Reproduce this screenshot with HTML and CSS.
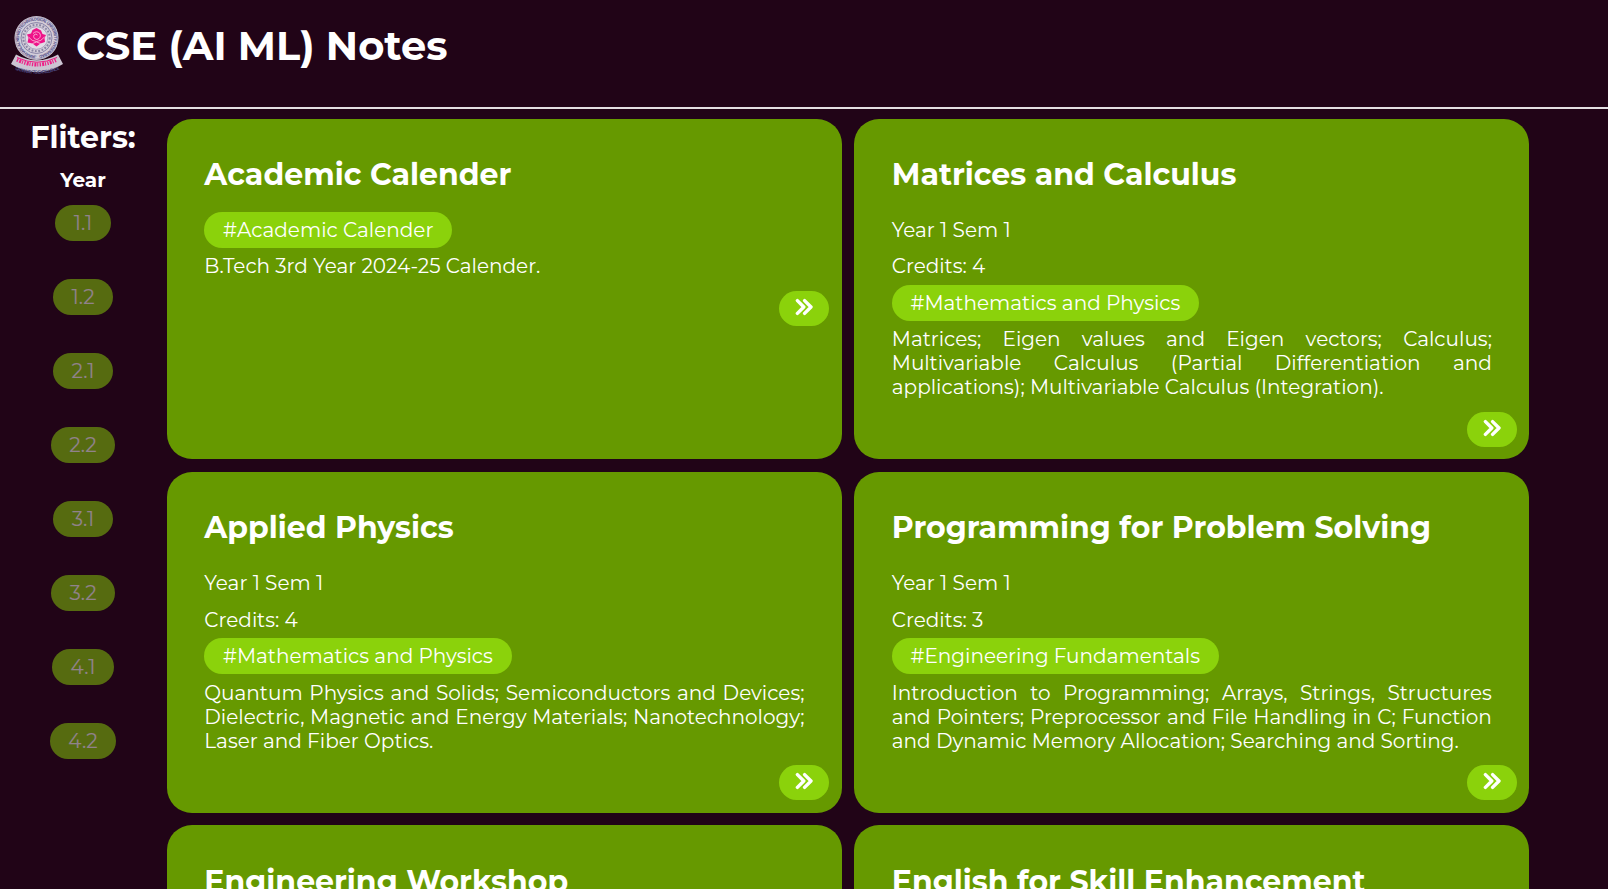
FILE: index.html
```html
<!DOCTYPE html>
<html lang="en">
<head>
<meta charset="utf-8">
<title>CSE (AI ML) Notes</title>
<link rel="stylesheet" href="styles.css">
</head>
<body>
<header class="header">
  <svg class="logo" viewBox="0 0 54 60">
    <defs>
      <path id="ring" d="M26.500 40.500a17.500 17.500 0 1 1 .1 0"/>
      <path id="motto" d="M3 54Q27 63.500 51 54"/>
    </defs>
    <circle cx="26.500" cy="23" r="22" fill="#d3cdd9"/>
    <circle cx="26.500" cy="23" r="21" fill="none" stroke="#8e87a6" stroke-width=".6"/>
    <text class="logo-ring"><textPath href="#ring" textLength="107">JAWAHARLAL NEHRU TECHNOLOGICAL UNIVERSITY HYDERABAD</textPath></text>
    <circle cx="26.500" cy="23" r="15.500" fill="#d3cdd9" stroke="#76719a" stroke-width=".8"/>
    <circle cx="26.500" cy="23" r="13.200" fill="none" stroke="#8985a3" stroke-width="2" stroke-dasharray="1.800 1.600"/>
    <circle cx="26.500" cy="23" r="11.300" fill="#e2dce6" stroke="#77729a" stroke-width=".5"/>
    <path d="M26.500 13l4.500 2.500 1.500 3.500 3.500 1-1.500 3 .5 4-4.500 1.500-4 3-4-3-5-1 1-4.500-1.500-3.500 4-1 1.500-3.500z" fill="#ee1288"/>
    <path d="M23 18.500q3.500-3.500 7 0q1.500 4.500-3 6q-4.500-1-3-4.500q2-2 3.500 0" fill="none" stroke="#fbc4e0" stroke-width=".8"/>
    <path d="M18.500 22q3.500 4.500 8 4.500t8-4.500M22.500 28.500l4-1.500 4 1.500" fill="none" stroke="#fbc4e0" stroke-width=".8"/>
    <path d="M6 39.500Q27 51 48 39.500L53 49Q27 65.500 1 49Z" fill="#cbc4d2"/>
    <path d="M7 42.500Q27 52 47 42.500" fill="none" stroke="#ee2087" stroke-width="1"/>
    <path d="M7 44.700Q27 54.500 47 44.700" fill="none" stroke="#ee2087" stroke-width="3.800" stroke-dasharray="1.300 1.200 2 .9 1 1.400"/>
    <text class="logo-motto"><textPath href="#motto" startOffset="2" textLength="46">GATEWAY TO EXCELLENCE</textPath></text>
  </svg>
  <h1 class="title">CSE (AI ML) Notes</h1>
</header>
<div class="page">
  <aside class="filters">
    <h2 class="filters-title">Fliters:</h2>
    <h3 class="filters-group">Year</h3>
    <ul class="filter-list">
      <li class="chip">1.1</li>
      <li class="chip">1.2</li>
      <li class="chip">2.1</li>
      <li class="chip">2.2</li>
      <li class="chip">3.1</li>
      <li class="chip">3.2</li>
      <li class="chip">4.1</li>
      <li class="chip">4.2</li>
    </ul>
  </aside>
  <main class="cards">
    <article class="card">
      <h2 class="card-title">Academic Calender</h2>
      <p class="row"><span class="tag">#Academic Calender</span></p>
      <p class="desc">B.Tech 3rd Year 2024-25 Calender.</p>
      <a class="go"><svg class="go-icon" viewBox="0 0 18 18"><path d="M2.400 2.600l6.400 6.400-6.400 6.400M9.600 2.600l6.400 6.400-6.400 6.400"/></svg></a>
    </article>
    <article class="card">
      <h2 class="card-title">Matrices and Calculus</h2>
      <p class="row">Year 1 Sem 1</p>
      <p class="row">Credits: 4</p>
      <p class="row"><span class="tag">#Mathematics and Physics</span></p>
      <p class="desc">Matrices; Eigen values and Eigen vectors; Calculus; Multivariable Calculus (Partial Differentiation and applications); Multivariable Calculus (Integration).</p>
      <a class="go"><svg class="go-icon" viewBox="0 0 18 18"><path d="M2.400 2.600l6.400 6.400-6.400 6.400M9.600 2.600l6.400 6.400-6.400 6.400"/></svg></a>
    </article>
    <article class="card">
      <h2 class="card-title">Applied Physics</h2>
      <p class="row">Year 1 Sem 1</p>
      <p class="row">Credits: 4</p>
      <p class="row"><span class="tag">#Mathematics and Physics</span></p>
      <p class="desc">Quantum Physics and Solids; Semiconductors and Devices; Dielectric, Magnetic and Energy Materials; Nanotechnology; Laser and Fiber Optics.</p>
      <a class="go"><svg class="go-icon" viewBox="0 0 18 18"><path d="M2.400 2.600l6.400 6.400-6.400 6.400M9.600 2.600l6.400 6.400-6.400 6.400"/></svg></a>
    </article>
    <article class="card">
      <h2 class="card-title">Programming for Problem Solving</h2>
      <p class="row">Year 1 Sem 1</p>
      <p class="row">Credits: 3</p>
      <p class="row"><span class="tag">#Engineering Fundamentals</span></p>
      <p class="desc">Introduction to Programming; Arrays, Strings, Structures and Pointers; Preprocessor and File Handling in C; Function and Dynamic Memory Allocation; Searching and Sorting.</p>
      <a class="go"><svg class="go-icon" viewBox="0 0 18 18"><path d="M2.400 2.600l6.400 6.400-6.400 6.400M9.600 2.600l6.400 6.400-6.400 6.400"/></svg></a>
    </article>
    <article class="card">
      <h2 class="card-title">Engineering Workshop</h2>
    </article>
    <article class="card">
      <h2 class="card-title">English for Skill Enhancement</h2>
    </article>
  </main>
</div>
</body>
</html>
```
FILE: styles.css
```css
* { box-sizing: border-box; }
body {
  margin: 0;
  height: 889px;
  overflow: hidden;
  background: #210417;
  color: #fff;
  font: 400 20px/24px Montserrat, Inter, sans-serif;
}
h1, h2, h3, p, ul { margin: 0; padding: 0; }
.header {
  display: flex;
  align-items: flex-start;
  height: 109px;
  padding: 15px 0 0 10px;
  border-bottom: 2px solid #e3dfe2;
}
.logo { width: 54px; height: 60px; flex: none; }
.logo-ring { font: 700 4px Inter, sans-serif; fill: #56528a; }
.logo-motto { font: 700 4.4px Inter, sans-serif; fill: #4a467c; }
.title { margin: 7px 0 0 12px; font-size: 40px; line-height: 48px; white-space: nowrap; }
.page { display: flex; height: 780px; overflow: hidden; }
.filters {
  display: flex;
  flex-direction: column;
  align-items: center;
  width: 166px;
  margin-right: .8px;
  padding-top: 10px;
}
.filters-title { font-size: 30px; line-height: 37px; }
.filters-group { margin-top: 12px; font-size: 20px; line-height: 24px; }
.filter-list { margin-top: 13px; list-style: none; display: flex; flex-direction: column; align-items: center; gap: 38px; }
.chip { height: 36px; padding: 6px 18.75px; border-radius: 20px; background: #8bd20b; opacity: .5; }
.cards {
  display: grid;
  grid-template-columns: 675.1px 675.1px;
  grid-auto-rows: 340.7px;
  gap: 12.6px 12.4px;
  padding-top: 9.7px;
}
.card { display: flex; flex-direction: column; padding: 37.3px 37.5px 12px; border-radius: 25px; background: #690; }
.card-title { margin-bottom: 18.7px; font-size: 30px; line-height: 37px; white-space: nowrap; }
.row { height: 36.55px; padding-top: 6px; white-space: nowrap; }
.tag { display: inline-block; height: 36px; margin-top: -6px; padding: 6px 18.75px; border-radius: 20px; background: #8bd20b; }
.desc { padding-top: 6px; text-align: justify; }
.go {
  display: flex;
  justify-content: center;
  width: 50px;
  height: 35px;
  margin: 12.7px -24.8px 0 0;
  align-self: flex-end;
  padding-top: 7px;
  border-radius: 18px;
  background: #8bd20b;
}
.go-icon { width: 18px; height: 18px; fill: none; stroke: #fff; stroke-width: 3.4; stroke-linecap: round; stroke-linejoin: round; }
```
